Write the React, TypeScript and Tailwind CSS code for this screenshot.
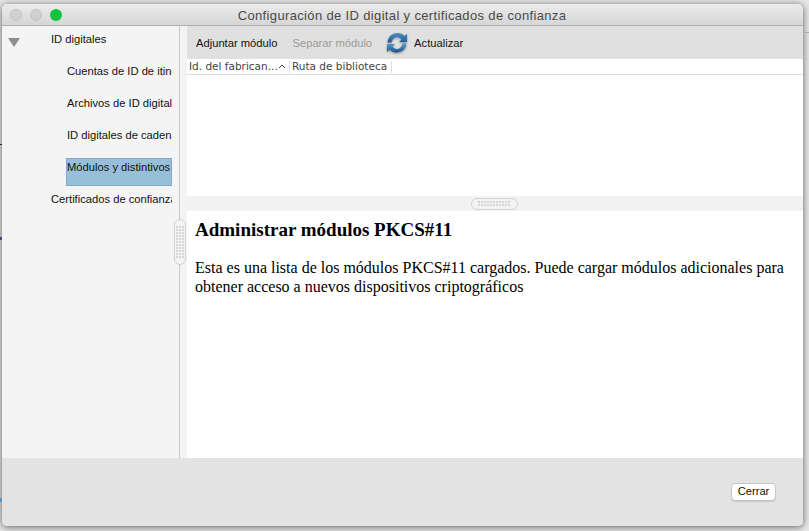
import React from "react";

const treeRows = [
  { label: "ID digitales", indent: "pl-[49px]" },
  { label: "Cuentas de ID de itinerancia", indent: "pl-[65px]" },
  { label: "Archivos de ID digitales", indent: "pl-[65px]" },
  { label: "ID digitales de cadena", indent: "pl-[65px]" },
  { label: "Módulos y distintivos", indent: "pl-[65px]", selected: true },
  { label: "Certificados de confianza", indent: "pl-[49px]" },
];

function TrafficLight({ color }: { color: string }) {
  return <span className={`block w-3 h-3 rounded-full ${color}`}></span>;
}

function RefreshIcon() {
  return (
    <svg width="22" height="22" viewBox="0 0 22 22" className="drop-shadow-[0_1px_1px_rgba(0,0,0,0.4)]">
      <defs>
        <linearGradient id="refreshTop" x1="0" y1="0" x2="0" y2="1">
          <stop offset="0%" stopColor="#4f8fc4" />
          <stop offset="100%" stopColor="#1f5c96" />
        </linearGradient>
        <linearGradient id="refreshBottom" x1="0" y1="0" x2="0" y2="1">
          <stop offset="0%" stopColor="#5b9bd0" />
          <stop offset="100%" stopColor="#1c5288" />
        </linearGradient>
      </defs>
      <path d="M1.5 10.5 C2 5 6 1 11.5 1 C14.5 1 16.8 2.3 18.3 4 L21 1.8 L21 10 L13 10 L15.6 7.4 C14.5 6 13 5 11.3 5 C8.2 5 6 7.2 5.5 10.5 Z" fill="url(#refreshTop)" />
      <path d="M20.5 11.5 C20 17 16 20.5 10.5 20.5 C7.5 20.5 5.2 19.2 3.7 17.5 L1 19.8 L1 12 L9 12 L6.4 14.6 C7.5 16 9 17 10.7 17 C13.8 17 16 14.8 16.5 11.5 Z" fill="url(#refreshBottom)" />
    </svg>
  );
}

function DragDots({ cols, rows }: { cols: number; rows: number }) {
  return (
    <div
      className={`grid gap-px ${cols === 3 ? "grid-cols-3" : "grid-cols-[repeat(11,2px)]"}`}
    >
      {Array.from({ length: cols * rows }).map((_, i) => (
        <span key={i} className="block w-[2px] h-[2px] bg-[#d6d6d6]"></span>
      ))}
    </div>
  );
}

export default function App() {
  return (
    <div className="relative w-[809px] h-[531px] overflow-hidden bg-[#e6e6e6] pl-[2px] pt-[4px] font-['Liberation_Sans',sans-serif]">
      {/* Bits of the window behind, showing past the edges */}
      <span className="absolute left-[803px] top-[32px] w-[6px] h-px bg-[#a8a8a8] z-10"></span>
      <span className="absolute left-0 top-[144px] w-[2px] h-px bg-[#222] z-10"></span>
      <span className="absolute left-0 top-[237px] w-[2px] h-[3px] bg-[#44506e] z-10"></span>
      <span className="absolute left-0 top-[498px] w-[2px] h-[4px] bg-[#5a93c4] z-10"></span>

      <div className="relative w-[801px] h-[522px] flex flex-col rounded-[5px] overflow-hidden bg-[#e3e3e3] shadow-[0_1px_7px_rgba(0,0,0,0.6)]">
        {/* Title bar */}
        <div className="h-[22px] shrink-0 flex items-center bg-gradient-to-b from-[#ebebeb] to-[#d6d6d6] border-b border-[#b1b1b1]">
          <div className="flex gap-2 pl-[8px]">
            <TrafficLight color="bg-[#d0d0d0] border border-[#c2c2c2]" />
            <TrafficLight color="bg-[#d0d0d0] border border-[#c2c2c2]" />
            <TrafficLight color="bg-[#0ec73f]" />
          </div>
          <div className="flex-1 text-center text-[13px] leading-[22px] pt-[2px] tracking-[0.35px] text-[#4a4a4a] pr-[61px]">
            Configuración de ID digital y certificados de confianza
          </div>
        </div>

        {/* Body */}
        <div className="h-[432px] shrink-0 flex bg-[#f3f3f3]">
          <div className="w-[178px] shrink-0 border-r border-[#c8c8c8] bg-[#f4f4f4] relative">
            <span className="absolute left-[6px] top-[12px] w-0 h-0 border-l-[6px] border-r-[6px] border-t-[9px] border-l-transparent border-r-transparent border-t-[#8f8f8f]"></span>
            <div className="w-[170px] overflow-hidden">
              {treeRows.map((row) => (
                <div key={row.label} className={`h-[32px] text-[11.2px] leading-[26px] text-[#111] whitespace-nowrap ${row.indent}`}>
                  {row.selected ? (
                    <div className="pt-[4px]">
                      <div className="-ml-[1px] h-[28px] w-[106px] bg-[#97c0d8] border border-[#7fa9cf] leading-[16px] overflow-hidden">
                        {row.label}
                      </div>
                    </div>
                  ) : (
                    row.label
                  )}
                </div>
              ))}
            </div>
          </div>

          <div className="w-[7px] shrink-0"></div>

          <div className="flex-1 flex flex-col min-w-0">
            {/* Toolbar */}
            <div className="h-[33px] shrink-0 flex items-center bg-[#e0e0e0] text-[11.2px] pl-[9px] pt-px">
              <span className="text-[#111]">Adjuntar módulo</span>
              <span className="text-[#9a9a9a] ml-[15px]">Separar módulo</span>
              <span className="ml-[14px] -mt-px"><RefreshIcon /></span>
              <span className="text-[#111] ml-[6px]">Actualizar</span>
            </div>

            {/* Table */}
            <div className="h-[137px] shrink-0 bg-white">
              <div className="h-[16px] flex items-center border-b border-[#dcdcdc] text-[10.5px] text-[#444] font-['DejaVu_Sans',sans-serif] leading-none">
                <div className="w-[103px] pl-[2px] flex items-center justify-between pr-[3px] border-r border-[#dcdcdc] h-[12px]">
                  <span>Id. del fabrican...</span>
                  <svg width="8" height="5" viewBox="0 0 8 5" fill="none"><path d="M1 4 L4 1 L7 4" stroke="#444" strokeWidth="1" /></svg>
                </div>
                <div className="w-[102px] pl-[2px] border-r border-[#dcdcdc] h-[12px]">Ruta de biblioteca</div>
              </div>
            </div>

            {/* Horizontal splitter */}
            <div className="h-[15px] shrink-0 flex items-center justify-center bg-[#f2f2f2] pr-[2px]">
              <div className="w-[47px] h-[12px] rounded-full border border-[#d2d2d2] flex items-center justify-center">
                <DragDots cols={11} rows={2} />
              </div>
            </div>

            {/* Help text */}
            <div className="flex-1 bg-white pl-[8px] pr-[8px] pt-[8px] font-['Liberation_Serif',serif] text-black">
              <h1 className="text-[19px] leading-[22px] font-bold">Administrar módulos PKCS#11</h1>
              <p className="mt-[17px] text-[16px] leading-[19px] whitespace-nowrap">
                Esta es una lista de los módulos PKCS#11 cargados. Puede cargar módulos adicionales para
                <br />
                obtener acceso a nuevos dispositivos criptográficos
              </p>
            </div>
          </div>
        </div>

        {/* Footer */}
        <div className="flex-1 flex justify-end items-start pt-[25px] pr-[27px] bg-[#e3e3e3]">
          <button className="w-[45px] h-[18px] rounded-[4px] bg-white border border-[#c6c6c6] text-[11.2px] leading-none text-[#111] shadow-[0_1px_0_rgba(0,0,0,0.1)]">
            Cerrar
          </button>
        </div>

        {/* Sidebar drag handle sits over the divider */}
        <div className="absolute left-[172px] top-[215px] w-[12px] h-[46px] rounded-full border border-[#d2d2d2] bg-[#f4f4f4] flex items-center justify-center">
          <DragDots cols={3} rows={11} />
        </div>
      </div>
    </div>
  );
}
